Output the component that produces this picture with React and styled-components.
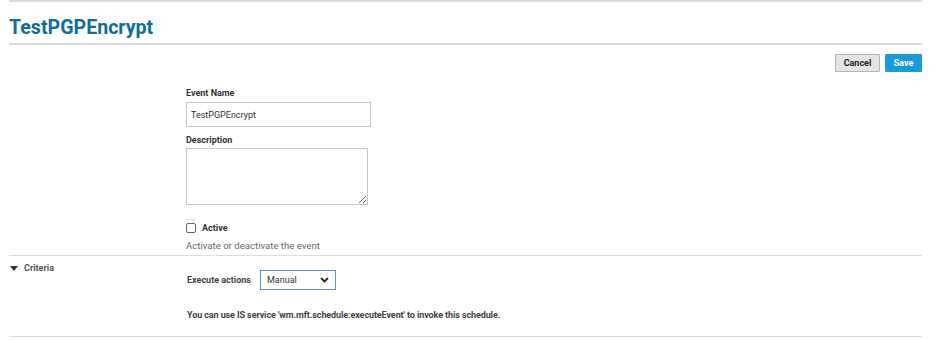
import styled, { createGlobalStyle } from 'styled-components';

const GlobalStyle = createGlobalStyle`
  body {
    margin: 0;
    background: #fff;
    font-family: Roboto, "Liberation Sans", sans-serif;
    color: #333;
  }
`;

const Page = styled.div`
  width: 913px;
  padding-left: 9px;
`;

const Rule = styled.div`
  height: ${(props) => (props.thick ? 2 : 1)}px;
  background: #dcdcdc;
  margin-top: ${(props) => props.top || 0}px;
`;

const Title = styled.h1`
  margin: 0;
  padding: 16px 0 5px;
  font-size: 19.6px;
  line-height: 20px;
  font-weight: 700;
  color: #0f6e98;
  border-bottom: 2px solid #dcdcdc;
`;

const Actions = styled.div`
  display: flex;
  justify-content: flex-end;
  gap: 5px;
  margin-top: 9px;
`;

const Button = styled.button`
  width: ${(props) => (props.primary ? 37 : 45)}px;
  height: 18px;
  padding: 0;
  font-family: Roboto, "Liberation Sans", sans-serif;
  font-size: 9px;
  font-weight: 700;
  border-radius: 1px;
  border: 1px solid ${(props) => (props.primary ? '#1a9bd7' : '#b5b5b5')};
  background: ${(props) => (props.primary ? '#1a9bd7' : '#e4e4e4')};
  color: ${(props) => (props.primary ? '#fff' : '#222')};
`;

const Form = styled.div`
  padding-left: 177px;
  padding-top: 15px;
`;

const Label = styled.div`
  font-size: 9px;
  font-weight: 700;
  color: #333;
  line-height: 12px;
  margin-bottom: ${(props) => props.gap || 3}px;
`;

const TextInput = styled.input`
  display: block;
  box-sizing: border-box;
  width: 185px;
  height: 25px;
  border: 1px solid #c8c8c8;
  padding: 0 4px;
  margin: 0 0 7px;
  font-family: Roboto, "Liberation Sans", sans-serif;
  font-size: 9px;
  color: #333;
  outline: none;
`;

const TextArea = styled.textarea`
  display: block;
  box-sizing: border-box;
  width: 182px;
  height: 57px;
  border: 1px solid #c8c8c8;
  resize: both;
  margin: 0;
  font-family: Roboto, "Liberation Sans", sans-serif;
`;

const Stub = styled.div`
  width: 10px;
  height: 1px;
  background: #dcdcdc;
  margin-top: 14px;
`;

const CheckRow = styled.label`
  display: flex;
  align-items: center;
  gap: 6px;
  height: 10px;
  margin-top: 3px;
  font-size: 9px;
  font-weight: 700;
  color: #333;
`;

const Box = styled.span`
  display: inline-block;
  box-sizing: border-box;
  width: 10px;
  height: 10px;
  border: 1px solid #666;
  border-radius: 2px;
`;

const Hint = styled.div`
  font-size: 9.6px;
  color: #6a6a6a;
  margin-top: 7px;
  line-height: 12px;
  padding-bottom: 3px;
`;

const Section = styled.div`
  display: flex;
  padding-top: 6px;
`;

const SectionHead = styled.div`
  width: 177px;
  display: flex;
  align-items: flex-start;
  gap: 6px;
  font-size: 9px;
  font-weight: 700;
  color: #555;
  line-height: 12px;
  padding-left: 1px;
`;

const Caret = styled.span`
  width: 0;
  height: 0;
  margin-top: 4px;
  border-left: 4px solid transparent;
  border-right: 4px solid transparent;
  border-top: 5px solid #333;
`;

const SectionBody = styled.div`
  display: flex;
  flex-direction: column;
  padding-top: 8px;
`;

const SelectRow = styled.div`
  display: flex;
  align-items: center;
  gap: 9px;
  font-size: 9px;
  font-weight: 700;
  color: #444;
`;

const Select = styled.div`
  box-sizing: border-box;
  width: 76px;
  height: 20px;
  border: 1px solid #5b95d8;
  display: flex;
  align-items: center;
  justify-content: space-between;
  padding: 0 6px;
  font-size: 9px;
  font-weight: 400;
  color: #333;
`;

const Note = styled.div`
  font-size: 9px;
  font-weight: 700;
  color: #444;
  margin-top: 19px;
  line-height: 12px;
  letter-spacing: -0.1px;
`;

export default function App() {
  return (
    <Page>
      <GlobalStyle />
      <Rule thick />
      <Title>TestPGPEncrypt</Title>
      <Actions>
        <Button type="button">Cancel</Button>
        <Button type="button" primary>Save</Button>
      </Actions>
      <Form>
        <Label>Event Name</Label>
        <TextInput defaultValue="TestPGPEncrypt" />
        <Label gap={2}>Description</Label>
        <TextArea />
        <Stub />
        <CheckRow>
          <Box />
          Active
        </CheckRow>
        <Hint>Activate or deactivate the event</Hint>
      </Form>
      <Rule />
      <Section>
        <SectionHead>
          <Caret />
          Criteria
        </SectionHead>
        <SectionBody>
          <SelectRow>
            Execute actions
            <Select>
              Manual
              <svg width="9" height="6" viewBox="0 0 9 6">
                <path d="M1 1l3.5 3.5L8 1" stroke="#222" strokeWidth="1.8" fill="none" />
              </svg>
            </Select>
          </SelectRow>
          <Note>You can use IS service 'wm.mft.schedule:executeEvent' to invoke this schedule.</Note>
        </SectionBody>
      </Section>
      <Rule top={15} />
    </Page>
  );
}
